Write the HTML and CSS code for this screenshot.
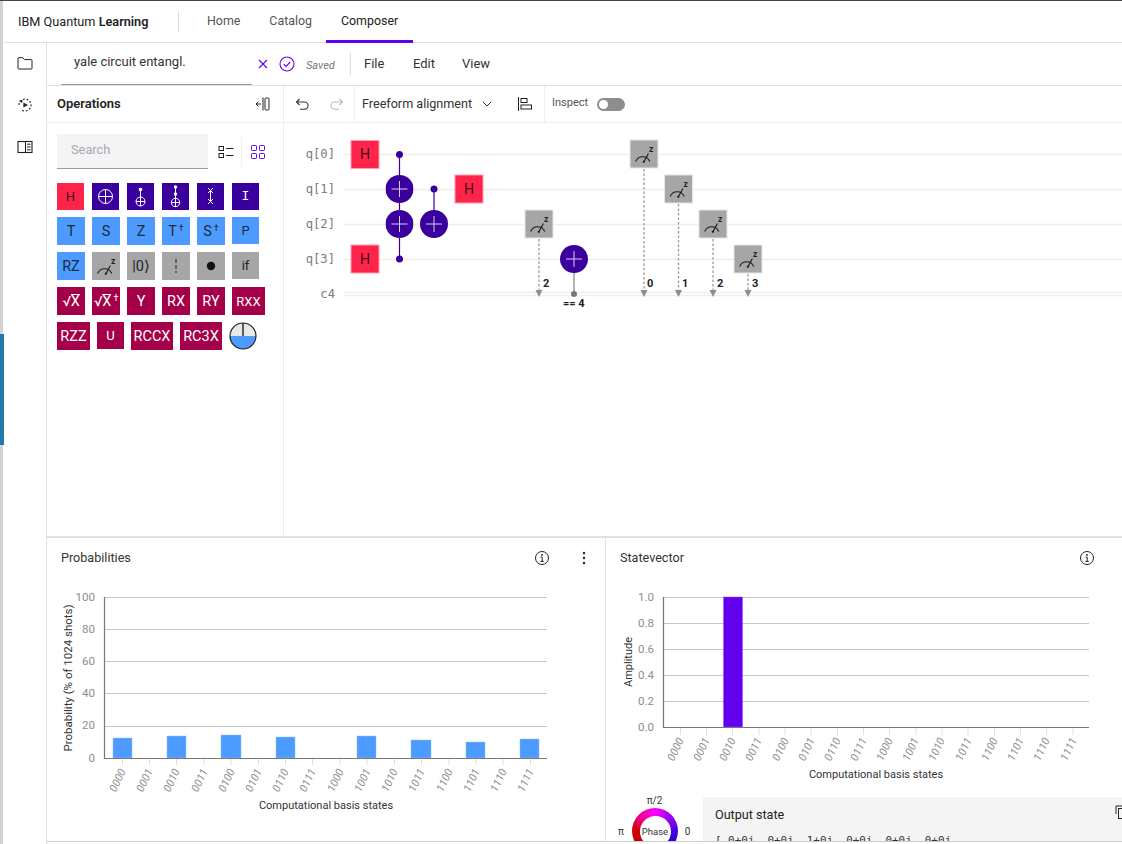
FILE: index.html
```html
<!DOCTYPE html>
<html lang="en">
<head>
<meta charset="utf-8">
<title>IBM Quantum Composer</title>
<link rel="stylesheet" href="styles.css">
</head>
<body>
<svg class="defs" width="0" height="0" aria-hidden="true">
  <symbol id="measure" viewBox="0 0 28 28">
    <path d="M5.700 21.500a7.500 7.500 0 0 1 14 0" fill="none" stroke="#1a1a1a" stroke-width="1.100"/>
    <path d="M13.800 22L18.400 13.400" fill="none" stroke="#1a1a1a" stroke-width="1.100"/>
    <circle cx="13.800" cy="21.800" r="1.100" fill="#1a1a1a"/>
    <text x="19" y="11.500" class="mz">z</text>
  </symbol>
  <symbol id="target" viewBox="0 0 28 28">
    <circle cx="14" cy="14" r="14" fill="#3a009e"/>
    <path d="M6 14h16M14 6v16" stroke="#d9ccf0" stroke-width="1" fill="none"/>
  </symbol>
  <symbol id="info" viewBox="0 0 16 16">
    <circle cx="8" cy="8" r="6.500" fill="none" stroke="#222" stroke-width="1"/>
    <path d="M6.600 7.200H8.200V11.400M6.400 11.400H9.800" fill="none" stroke="#222" stroke-width="1"/>
    <circle cx="8" cy="5" r=".9" fill="#222"/>
  </symbol>
</svg>
<div class="app">
  <div class="strip"><div class="thumb"></div></div>
  <div class="main">
    <header class="topbar">
      <div class="brand">IBM Quantum <b>Learning</b></div>
      <div class="brand-sep"></div>
      <nav class="tabs">
        <a class="tab">Home</a>
        <a class="tab">Catalog</a>
        <a class="tab active">Composer</a>
      </nav>
    </header>
    <div class="below">
      <aside class="rail">
        <svg class="ic16" viewBox="0 0 16 16"><path d="M1 3.500a.8.8 0 0 1 .8-.8h3.900l1.700 1.900h6.800a.8.8 0 0 1 .8.8v7.800a.8.8 0 0 1-.8.8H1.800a.8.8 0 0 1-.8-.8z" fill="none" stroke="#222" stroke-width="1"/></svg>
        <svg class="ic16" viewBox="0 0 16 16"><path d="M2 8a6 6 0 1 1 2 4.500" fill="none" stroke="#222" stroke-width="1.100" stroke-dasharray="2 1.600"/><path d="M2 3.400L5.800 3.200 4.600 6.200z" fill="#222" transform="rotate(-10 4 4)"/><path d="M6.400 5.600L11 8l-4.600 2.400z" fill="#222"/></svg>
        <svg class="ic16" viewBox="0 0 16 16"><rect x="1" y="2.500" width="14" height="11" fill="none" stroke="#222" stroke-width="1.100"/><path d="M8.500 2.500v11M10 5.200h3.600M10 8h3.600M10 10.800h3.600" fill="none" stroke="#222" stroke-width="1"/></svg>
      </aside>
      <div class="content">
        <div class="filebar">
          <div class="fname">yale circuit entangl.</div>
          <svg class="ic-x" viewBox="0 0 10 10"><path d="M1 1l8 8M9 1l-8 8" stroke="#6200ee" stroke-width="1.100" fill="none"/></svg>
          <svg class="ic-check" viewBox="0 0 16 16"><circle cx="8" cy="8" r="7" fill="none" stroke="#6200ee" stroke-width="1.100"/><path d="M4.800 8.200l2.200 2.200 4.200-4.400" fill="none" stroke="#6200ee" stroke-width="1.100"/></svg>
          <span class="saved">Saved</span>
          <span class="file-sep"></span>
          <span class="menu">File</span>
          <span class="menu">Edit</span>
          <span class="menu">View</span>
        </div>
        <div class="work">
          <section class="ops">
            <div class="ops-head">
              <strong class="ops-title">Operations</strong>
              <svg class="ic-collapse" viewBox="0 0 16 16"><path d="M1 8h5M3.400 5.600L1 8l2.400 2.400M8 1.500v13" fill="none" stroke="#222" stroke-width="1"/><rect x="10" y="2" width="4" height="12" rx="1.200" fill="none" stroke="#222" stroke-width="1"/></svg>
            </div>
            <div class="ops-body">
              <div class="searchrow">
                <div class="search">Search</div>
                <svg class="ic-list" viewBox="0 0 16 16"><rect x="1" y="2.500" width="4.500" height="4" fill="none" stroke="#222"/><rect x="1" y="9.500" width="4.500" height="4" fill="none" stroke="#222"/><path d="M8 4.500h7.500M8 11.500h7.500" stroke="#222" fill="none"/></svg>
                <span class="view-sep"></span>
                <svg class="ic-grid" viewBox="0 0 14 14"><rect x=".5" y=".5" width="5" height="5" rx=".8" fill="none" stroke="#6200ee"/><rect x="8.500" y=".5" width="5" height="5" rx=".8" fill="none" stroke="#6200ee"/><rect x=".5" y="8.500" width="5" height="5" rx=".8" fill="none" stroke="#6200ee"/><rect x="8.500" y="8.500" width="5" height="5" rx=".8" fill="none" stroke="#6200ee"/></svg>
              </div>
              <div class="gates">
                <div class="grow g-r1">
                  <div class="gate s27 red">H</div>
                  <div class="gate s27 pur"><svg class="gi" viewBox="0 0 27 27"><circle cx="13.500" cy="13.500" r="7" fill="none" stroke="#fff"/><path d="M6.500 13.500h14M13.500 6.500v14" stroke="#fff" fill="none"/></svg></div>
                  <div class="gate s27 pur"><svg class="gi" viewBox="0 0 27 27"><circle cx="13.500" cy="6.500" r="1.800" fill="#fff"/><path d="M13.500 6.500v9" stroke="#fff" fill="none"/><circle cx="13.500" cy="18.500" r="4.500" fill="none" stroke="#fff"/><path d="M9 18.500h9M13.500 14v9" stroke="#fff" fill="none"/></svg></div>
                  <div class="gate s27 pur"><svg class="gi" viewBox="0 0 27 27"><circle cx="13.500" cy="4" r="1.700" fill="#fff"/><circle cx="13.500" cy="11" r="1.700" fill="#fff"/><path d="M13.500 4v13" stroke="#fff" fill="none"/><circle cx="13.500" cy="19.500" r="4.200" fill="none" stroke="#fff"/><path d="M9.300 19.500h8.400M13.500 15.300v8.400" stroke="#fff" fill="none"/></svg></div>
                  <div class="gate s27 pur"><svg class="gi" viewBox="0 0 27 27"><path d="M11 5l5 5M16 5l-5 5M11 16l5 5M16 16l-5 5M13.500 7.500v11" stroke="#fff" fill="none"/></svg></div>
                  <div class="gate s27 pur mono">I</div>
                </div>
                <div class="grow">
                  <div class="gate s28 blu big">T</div>
                  <div class="gate s28 blu big">S</div>
                  <div class="gate s28 blu big">Z</div>
                  <div class="gate s28 blu big">T<sup class="dag">†</sup></div>
                  <div class="gate s28 blu big">S<sup class="dag">†</sup></div>
                  <div class="gate s27 blu">P</div>
                </div>
                <div class="grow">
                  <div class="gate s28 blu big">RZ</div>
                  <div class="gate s28 gry"><svg class="gi"><use href="#measure"/></svg></div>
                  <div class="gate s28 gry big">|0⟩</div>
                  <div class="gate s28 gry"><svg class="gi" viewBox="0 0 28 28"><path d="M14 7v14" stroke="#222" stroke-dasharray="4 2" fill="none"/></svg></div>
                  <div class="gate s28 gry"><svg class="gi" viewBox="0 0 28 28"><circle cx="14" cy="14" r="4.200" fill="#111"/></svg></div>
                  <div class="gate s27 gry">if</div>
                </div>
                <div class="grow">
                  <div class="gate s28 crm big">√<span class="over">X</span></div>
                  <div class="gate s28 crm big">√<span class="over">X</span><sup class="dag">†</sup></div>
                  <div class="gate s28 crm big">Y</div>
                  <div class="gate s28 crm big">RX</div>
                  <div class="gate s28 crm big">RY</div>
                  <div class="gate s28 w33 crm">RXX</div>
                </div>
                <div class="grow">
                  <div class="gate s28 w33 crm big">RZZ</div>
                  <div class="gate s27 crm">U</div>
                  <div class="gate s28 w42 crm big">RCCX</div>
                  <div class="gate s28 w42 crm big">RC3X</div>
                  <svg class="bloch" viewBox="0 0 28 28"><path d="M1 14a13 13 0 0 1 26 0z" fill="#e8e8e8"/><path d="M1 14a13 13 0 0 0 26 0z" fill="#4d9bff"/><circle cx="14" cy="14" r="13" fill="none" stroke="#222" stroke-width="1.200"/><path d="M14 1v13" stroke="#222" stroke-width="1.400" fill="none"/></svg>
                </div>
              </div>
            </div>
          </section>
          <section class="editor">
            <div class="toolbar">
              <div class="tb-cell tb-undo">
                <svg class="ic16" viewBox="0 0 16 16"><path d="M2.500 6h8a3.600 3.600 0 0 1 0 7.200H6M5.500 3L2.500 6l3 3" fill="none" stroke="#333" stroke-width="1.100"/></svg>
                <svg class="ic16" viewBox="0 0 16 16"><path d="M13.500 6h-8a3.600 3.600 0 0 0 0 7.200H10M10.500 3l3 3-3 3" fill="none" stroke="#bbb" stroke-width="1.100"/></svg>
              </div>
              <div class="tb-cell tb-align">
                <span class="align-label">Freeform alignment</span>
                <svg class="ic-chev" viewBox="0 0 10 6"><path d="M.8.8L5 5l4.200-4.200" fill="none" stroke="#333"/></svg>
                <svg class="ic-align" viewBox="0 0 16 16"><path d="M1.500 1v14" stroke="#222" fill="none"/><rect x="4" y="2.500" width="6" height="4" fill="none" stroke="#222"/><rect x="4" y="9" width="10.500" height="4" fill="none" stroke="#222"/></svg>
              </div>
              <div class="tb-inspect">
                <span class="inspect-label">Inspect</span>
                <span class="toggle"><span class="knob"></span></span>
              </div>
            </div>
            <svg class="circuit" viewBox="284 123 838 413" width="838" height="413">
              <g class="wire">
                <path d="M344 154.500H1122M344 189.500H1122M344 224.500H1122M344 259.500H1122"/>
                <path d="M344 292.500H1122M344 295.500H1122"/>
              </g>
              <g class="qlabel">
                <text x="335" y="158">q[0]</text>
                <text x="335" y="193">q[1]</text>
                <text x="335" y="228">q[2]</text>
                <text x="335" y="263">q[3]</text>
                <text x="335" y="298">c4</text>
              </g>
              <path class="link" d="M399.500 154V259M434 189V224"/>
              <circle class="ctrl" cx="399.500" cy="154.500" r="3.500"/>
              <circle class="ctrl" cx="399.500" cy="259" r="3.500"/>
              <circle class="ctrl" cx="434" cy="189" r="3.500"/>
              <use href="#target" x="385.500" y="175" width="28" height="28"/>
              <use href="#target" x="385.500" y="210" width="28" height="28"/>
              <use href="#target" x="420" y="210" width="28" height="28"/>
              <g>
                <rect class="hbox" x="351" y="140.500" width="28" height="28"/>
                <rect class="hbox" x="351" y="245" width="28" height="28"/>
                <rect class="hbox" x="455" y="175" width="28" height="28"/>
                <text class="htext" x="365" y="159">H</text>
                <text class="htext" x="365" y="264">H</text>
                <text class="htext" x="469" y="194">H</text>
              </g>
              <g class="dash">
                <path d="M539 239V291M644 169V291M678.500 204V291M713 239V291M748 274V291"/>
              </g>
              <g class="tri">
                <path d="M535.500 290h7l-3.500 7z"/>
                <path d="M640.500 290h7l-3.500 7z"/>
                <path d="M675 290h7l-3.500 7z"/>
                <path d="M709.500 290h7l-3.500 7z"/>
                <path d="M744.500 290h7l-3.500 7z"/>
              </g>
              <g>
                <rect class="mbox" x="525" y="210" width="28" height="28"/>
                <use href="#measure" x="525" y="210" width="28" height="28"/>
                <rect class="mbox" x="630" y="140" width="28" height="28"/>
                <use href="#measure" x="630" y="140" width="28" height="28"/>
                <rect class="mbox" x="664.500" y="175" width="28" height="28"/>
                <use href="#measure" x="664.500" y="175" width="28" height="28"/>
                <rect class="mbox" x="699" y="210" width="28" height="28"/>
                <use href="#measure" x="699" y="210" width="28" height="28"/>
                <rect class="mbox" x="734" y="245" width="28" height="28"/>
                <use href="#measure" x="734" y="245" width="28" height="28"/>
              </g>
              <g class="cbit">
                <text x="543" y="287">2</text>
                <text x="647" y="287">0</text>
                <text x="682" y="287">1</text>
                <text x="717" y="287">2</text>
                <text x="752" y="287">3</text>
                <text x="563" y="307">== 4</text>
              </g>
              <path class="cond" d="M574 270V294"/>
              <circle class="conddot" cx="574" cy="294" r="3"/>
              <use href="#target" x="560" y="245" width="28" height="28"/>
            </svg>
          </section>
        </div>
        <div class="panels">
          <section class="panel panel-prob">
            <div class="panel-head">
              <h2 class="panel-title">Probabilities</h2>
              <svg class="ic-info"><use href="#info"/></svg>
              <svg class="ic-kebab" viewBox="0 0 4 14"><circle cx="2" cy="2" r="1.200"/><circle cx="2" cy="7" r="1.200"/><circle cx="2" cy="12" r="1.200"/></svg>
            </div>
            <svg class="chart" viewBox="47 575 558 245" width="558" height="245">
              <path class="grid" d="M104 597.500H547M104 629.500H547M104 661.500H547M104 693.500H547M104 726.500H547"/>
              <path class="tick" d="M122.500 758v7M149.500 758v7M176.500 758v7M204 758v7M231 758v7M258.500 758v7M285.500 758v7M312.500 758v7M340 758v7M367 758v7M394.500 758v7M421.500 758v7M449 758v7M476 758v7M503 758v7M530.500 758v7"/>
              <g class="bars">
                <rect x="113" y="738" width="19" height="20"/>
                <rect x="167" y="736" width="19" height="22"/>
                <rect x="221" y="735" width="20" height="23"/>
                <rect x="276" y="737" width="19" height="21"/>
                <rect x="357" y="736" width="19" height="22"/>
                <rect x="411" y="740" width="20" height="18"/>
                <rect x="466" y="742" width="19" height="16"/>
                <rect x="520" y="739" width="19" height="19"/>
              </g>
              <path class="axis" d="M104.500 597V758.500H547"/>
              <g class="ytick">
                <text x="95" y="601">100</text>
                <text x="95" y="633">80</text>
                <text x="95" y="665">60</text>
                <text x="95" y="697">40</text>
                <text x="95" y="729">20</text>
                <text x="95" y="762">0</text>
              </g>
              <g class="xtick">
                <text transform="translate(126 771) rotate(-65)">0000</text>
                <text transform="translate(153 771) rotate(-65)">0001</text>
                <text transform="translate(180 771) rotate(-65)">0010</text>
                <text transform="translate(208 771) rotate(-65)">0011</text>
                <text transform="translate(235 771) rotate(-65)">0100</text>
                <text transform="translate(262 771) rotate(-65)">0101</text>
                <text transform="translate(289 771) rotate(-65)">0110</text>
                <text transform="translate(316 771) rotate(-65)">0111</text>
                <text transform="translate(344 771) rotate(-65)">1000</text>
                <text transform="translate(371 771) rotate(-65)">1001</text>
                <text transform="translate(398 771) rotate(-65)">1010</text>
                <text transform="translate(425 771) rotate(-65)">1011</text>
                <text transform="translate(453 771) rotate(-65)">1100</text>
                <text transform="translate(480 771) rotate(-65)">1101</text>
                <text transform="translate(507 771) rotate(-65)">1110</text>
                <text transform="translate(534 771) rotate(-65)">1111</text>
              </g>
              <text class="atitle" x="326" y="809">Computational basis states</text>
              <text class="atitle atitle-long" transform="translate(72 678) rotate(-90)">Probability (% of 1024 shots)</text>
            </svg>
          </section>
          <section class="panel panel-state">
            <div class="panel-head">
              <h2 class="panel-title">Statevector</h2>
              <svg class="ic-info"><use href="#info"/></svg>
            </div>
            <svg class="chart" viewBox="606 575 516 215" width="516" height="215">
              <path class="grid" d="M663 597.500H1089M663 623.500H1089M663 649.500H1089M663 675.500H1089M663 701.500H1089"/>
              <path class="tick" d="M680.500 727v8M706.500 727v8M732.500 727v8M759 727v8M785 727v8M811 727v8M837.500 727v8M863.500 727v8M889.500 727v8M916 727v8M942 727v8M968 727v8M994.500 727v8M1020.500 727v8M1046.500 727v8M1073 727v8"/>
              <rect class="svbar" x="723.500" y="597" width="19" height="130"/>
              <path class="axis" d="M663.500 597V727.500H1089"/>
              <g class="ytick">
                <text x="654" y="601">1.0</text>
                <text x="654" y="627">0.8</text>
                <text x="654" y="653">0.6</text>
                <text x="654" y="679">0.4</text>
                <text x="654" y="705">0.2</text>
                <text x="654" y="731">0.0</text>
              </g>
              <g class="xtick">
                <text transform="translate(684 740) rotate(-65)">0000</text>
                <text transform="translate(710 740) rotate(-65)">0001</text>
                <text transform="translate(736 740) rotate(-65)">0010</text>
                <text transform="translate(762 740) rotate(-65)">0011</text>
                <text transform="translate(789 740) rotate(-65)">0100</text>
                <text transform="translate(815 740) rotate(-65)">0101</text>
                <text transform="translate(841 740) rotate(-65)">0110</text>
                <text transform="translate(867 740) rotate(-65)">0111</text>
                <text transform="translate(893 740) rotate(-65)">1000</text>
                <text transform="translate(919 740) rotate(-65)">1001</text>
                <text transform="translate(945 740) rotate(-65)">1010</text>
                <text transform="translate(972 740) rotate(-65)">1011</text>
                <text transform="translate(998 740) rotate(-65)">1100</text>
                <text transform="translate(1024 740) rotate(-65)">1101</text>
                <text transform="translate(1050 740) rotate(-65)">1110</text>
                <text transform="translate(1077 740) rotate(-65)">1111</text>
              </g>
              <text class="atitle" x="876" y="778">Computational basis states</text>
              <text class="atitle" transform="translate(632 662) rotate(-90)">Amplitude</text>
            </svg>
            <div class="state-foot">
              <div class="phase">
                <span class="ph-top">π/2</span>
                <span class="ph-left">π</span>
                <div class="wheel"><div class="hole">Phase</div></div>
                <span class="ph-right">0</span>
              </div>
              <div class="output">
                <div class="output-head">
                  <span class="output-title">Output state</span>
                  <svg class="ic-copy" viewBox="0 0 14 14"><path d="M1 9V1h8" fill="none" stroke="#222"/><rect x="3.500" y="3.500" width="10" height="10" fill="none" stroke="#222"/></svg>
                </div>
                <code class="output-code">[ 0+0j, 0+0j, 1+0j, 0+0j, 0+0j, 0+0j,</code>
              </div>
            </div>
          </section>
        </div>
      </div>
    </div>
  </div>
</div>
</body>
</html>
```

FILE: styles.css
```css
* { box-sizing: border-box; }
html, body { margin: 0; padding: 0; height: 100%; background: #fff; }
body { font-family: Roboto, "Liberation Sans", sans-serif; color: #222; overflow: hidden; }
.defs { display: none; }
.app { display: flex; width: 1122px; height: 844px; overflow: hidden; border-top: 1px solid #444; }
.strip { width: 4px; flex: none; background: linear-gradient(to right, #d2d2d2 3px, #fff 3px); }
.thumb { margin-top: 333px; height: 111px; width: 4px; background: #2479a8; }
.main { flex: 1; display: flex; flex-direction: column; min-width: 0; }

.topbar { height: 42px; flex: none; display: flex; align-items: center; border-bottom: 1px solid #e0e0e0; padding-left: 14px; }
.brand { font-size: 12.700px; color: #222; width: 160px; white-space: nowrap; }
.brand b { font-weight: 600; }
.brand-sep { width: 1px; height: 21px; background: #ddd; margin-right: 13.500px; }
.tabs { display: flex; height: 42px; margin-bottom: -1px; }
.tab { font-size: 12.400px; color: #555; padding: 0 14.500px; display: flex; align-items: center; border-bottom: 3px solid transparent; }
.tab.active { color: #222; border-bottom-color: #6200ee; }

.below { flex: 1; display: flex; min-height: 0; }
.rail { width: 43px; flex: none; border-right: 1px solid #e0e0e0; display: flex; flex-direction: column; align-items: center; gap: 26px; padding-top: 12px; }
.ic16 { width: 16px; height: 16px; display: block; flex: none; }
.content { flex: 1; min-width: 0; display: flex; flex-direction: column; }

.filebar { height: 43px; flex: none; display: flex; align-items: center; border-bottom: 1px solid #e0e0e0; padding-left: 14px; }
.fname { width: 191px; height: 42px; border-bottom: 1px solid #999; padding: 11px 0 0 13px; font-size: 13px; color: #333; align-self: flex-start; }
.ic-x { width: 10px; height: 10px; margin-left: 6px; }
.ic-check { width: 16px; height: 16px; margin-left: 11px; }
.saved { font-size: 11px; font-style: italic; color: #777; margin-left: 11px; width: 30px; padding-top: 2px; }
.file-sep { width: 1px; height: 24px; background: #ddd; margin-left: 14px; margin-right: 13px; }
.menu { font-size: 13px; color: #333; width: 49px; padding-bottom: 2px; }

.work { height: 450px; flex: none; display: flex; }
.ops { width: 237px; flex: none; border-right: 1px solid #eee; }
.ops-head { height: 37px; border-bottom: 1px solid #eee; display: flex; align-items: center; justify-content: space-between; padding: 0 12px 0 10px; }
.ops-title { font-size: 13px; font-weight: 600; color: #222; padding-bottom: 2px; }
.ic-collapse { width: 16px; height: 16px; }
.ops-body { padding: 11px 0 0 10px; }
.searchrow { display: flex; align-items: center; height: 35px; }
.search { width: 151px; height: 35px; background: #f4f4f4; border-bottom: 1px solid #999; padding: 8px 0 0 14px; font-size: 12.800px; color: #a8a8b4; }
.ic-list { width: 16px; height: 16px; margin-left: 10px; }
.view-sep { width: 1px; height: 30px; background: #f0f0f0; margin-left: 7px; margin-right: 9px; }
.ic-grid { width: 14px; height: 14px; }

.gates { margin-top: 14px; display: flex; flex-direction: column; gap: 7px; }
.grow { display: flex; gap: 7px; align-items: flex-start; }
.g-r1 { gap: 8px; }
.gate { display: flex; align-items: center; justify-content: center; font-size: 13px; flex: none; white-space: nowrap; }
.s27 { width: 27px; height: 27px; }
.s28 { width: 28px; height: 28px; }
.w33 { width: 33px; }
.w42 { width: 42px; }
.big { font-size: 14.500px; }
.red { background: #ff2449; color: #3a1020; }
.pur { background: #3a009e; color: #fff; }
.blu { background: #4d9bff; color: #1c2b40; }
.gry { background: #a6a6a6; color: #222; }
.crm { background: #a30049; color: #fff; }
.mono { font-family: "Liberation Mono", monospace; }
.gi { width: 100%; height: 100%; display: block; }
.dag { font-size: 9px; line-height: 0; margin-left: 2px; position: relative; top: -3px; vertical-align: baseline; }
.over { border-top: 1px solid currentColor; line-height: 14px; }
.bloch { width: 28px; height: 28px; flex: none; display: block; }
.mz { font: 700 8.500px Roboto, sans-serif; fill: #222; }

.editor { flex: 1; min-width: 0; display: flex; flex-direction: column; }
.toolbar { height: 37px; flex: none; border-bottom: 1px solid #eee; display: flex; align-items: center; }
.tb-undo { width: 71px; height: 36px; display: flex; align-items: center; gap: 19px; padding-left: 10px; border-right: 1px solid #eee; }
.tb-align { width: 190px; height: 36px; display: flex; align-items: center; padding-left: 7px; border-right: 1px solid #eee; }
.align-label { font-size: 12.600px; color: #333; width: 120px; white-space: nowrap; padding-bottom: 2px; }
.ic-chev { width: 10px; height: 6px; }
.ic-align { width: 16px; height: 16px; margin-left: 25px; }
.tb-inspect { display: flex; align-items: center; padding-left: 7px; }
.inspect-label { font-size: 11px; color: #555; width: 45px; padding-bottom: 4px; }
.toggle { width: 28px; height: 13px; border-radius: 7px; background: #8d8d8d; display: flex; align-items: center; padding-left: 2px; }
.knob { width: 9px; height: 9px; border-radius: 50%; background: #fff; }

.circuit { display: block; }
.wire path { stroke: #eee; stroke-width: 1.500; fill: none; }
.qlabel text { font: 12.200px "DejaVu Sans Mono", "Liberation Mono", monospace; fill: #777c85; text-anchor: end; }
.link { stroke: #3a009e; stroke-width: 1.200; fill: none; }
.ctrl { fill: #3a009e; }
.hbox { fill: #ff2449; stroke: #ff9cad; stroke-width: 1; }
.htext { font: 14px Roboto, sans-serif; fill: #3a1020; text-anchor: middle; }
.mbox { fill: #a6a6a6; stroke: #e6e6e6; stroke-width: 1; }
.dash path { stroke: #9a9a9a; stroke-width: 1.300; stroke-dasharray: 2.500 2; fill: none; }
.tri path { fill: #8d8d8d; }
.cbit text { font: 700 11px Roboto, sans-serif; fill: #222; }
.cond { stroke: #9a9a9a; stroke-width: 1.500; fill: none; }
.conddot { fill: #777; }

.panels { height: 306px; flex: none; display: flex; border-top: 2px solid #e0e0e0; border-bottom: 1px solid #ccc; overflow: hidden; }
.panel { display: flex; flex-direction: column; min-width: 0; overflow: hidden; }
.panel-prob { width: 559px; flex: none; border-right: 1px solid #e0e0e0; }
.panel-state { flex: 1; }
.panel-head { height: 37px; flex: none; display: flex; align-items: center; padding: 3px 0 0 14px; }
.panel-title { margin: 0 0 2px; font-size: 12.600px; font-weight: 400; color: #333; flex: 1; }
.ic-info { width: 16px; height: 16px; display: block; }
.panel-prob .ic-info { margin-right: 32px; }
.panel-state .ic-info { margin-right: 27px; }
.ic-kebab { width: 4px; height: 14px; fill: #222; margin-right: 19px; }
.chart { display: block; flex: none; }
.grid { stroke: #c6c6c6; stroke-width: 1; fill: none; }
.axis { stroke: #777; stroke-width: 1.200; fill: none; }
.tick { stroke: #e0e0e0; stroke-width: 1; fill: none; }
.bars rect { fill: #4d9bff; stroke: #8fc0ff; stroke-width: .5; }
.svbar { fill: #6200ee; stroke: #8f4dff; stroke-width: .5; }
.ytick text { font: 11.500px Roboto, sans-serif; fill: #8a8d96; text-anchor: end; }
.xtick text { font: italic 11px Roboto, sans-serif; fill: #8d8d8d; text-anchor: end; }
.atitle { font: 11px Roboto, sans-serif; fill: #333; text-anchor: middle; }
.atitle-long { font-size: 11.500px; }

.state-foot { flex: 1; display: flex; min-height: 0; overflow: hidden; }
.phase { width: 97px; flex: none; display: grid; grid-template-columns: 26px 46px 25px; grid-template-rows: 18px 46px; justify-items: center; align-items: center; font-size: 10px; color: #333; }
.ph-top { grid-column: 1 / 4; grid-row: 1; padding-top: 2px; }
.ph-left { grid-column: 1; grid-row: 2; padding-left: 4px; }
.ph-right { grid-column: 3; grid-row: 2; padding-right: 6px; }
.wheel { grid-column: 2; grid-row: 2; width: 46px; height: 46px; border-radius: 50%; background: conic-gradient(#f0f 0deg, #a000f0 45deg, #4a00e0 90deg, #3000d0 125deg, #00a050 180deg, #c00000 235deg, #d00000 270deg, #f0008c 315deg, #f0f 360deg); display: flex; align-items: center; justify-content: center; }
.hole { width: 31px; height: 31px; border-radius: 50%; background: #fff; display: flex; align-items: center; justify-content: center; font-size: 9.500px; color: #333; }
.output { flex: 1; margin-top: 7px; background: #f4f4f4; padding: 10px 0 0 12px; min-width: 0; overflow: hidden; }
.output-head { display: flex; align-items: center; justify-content: space-between; height: 15px; }
.output-title { font-size: 12.600px; color: #222; }
.ic-copy { width: 14px; height: 14px; margin-right: -7px; margin-top: -6px; flex: none; }
.output-code { display: block; margin-top: 12px; font: 10.900px "DejaVu Sans Mono", "Liberation Mono", monospace; white-space: pre; color: #333; }
```
